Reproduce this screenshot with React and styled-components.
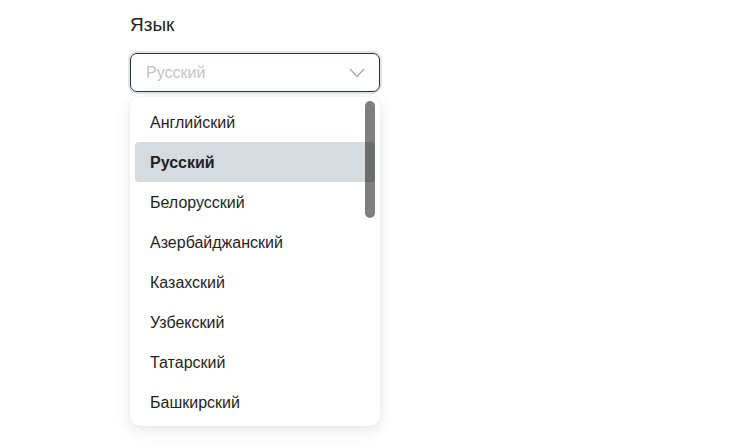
import React, { useState } from 'react';
import styled, { createGlobalStyle } from 'styled-components';

const GlobalStyle = createGlobalStyle`
  html, body {
    margin: 0;
    background: #ffffff;
    font-family: 'Liberation Sans', Arial, sans-serif;
    color: #1f1f1f;
  }
`;

const Page = styled.div`
  min-height: 446px;
  box-sizing: border-box;
  padding: 13px 0 0 130px;
`;

const Column = styled.div`
  width: 250px;
  display: flex;
  flex-direction: column;
`;

const Label = styled.div`
  font-size: 19px;
  line-height: 24px;
  color: #222;
  margin-bottom: 16px;
`;

const Control = styled.div`
  height: 39px;
  box-sizing: border-box;
  border: 1px solid #2e3338;
  border-radius: 7px;
  box-shadow: 0 0 0 2px #dfe5ea;
  display: flex;
  align-items: center;
  justify-content: space-between;
  padding: 1px 14px 0 15px;
  font-size: 16px;
  color: #c4c4c4;
`;

const Menu = styled.div`
  position: relative;
  margin-top: 5px;
  height: 329px;
  box-sizing: border-box;
  background: #fff;
  border-radius: 10px;
  box-shadow: 0 4px 16px rgba(0, 0, 0, 0.1), 0 0 3px rgba(0, 0, 0, 0.05);
  overflow: hidden;
`;

const List = styled.ul`
  list-style: none;
  margin: 0;
  padding: 5px;
`;

const Item = styled.li`
  height: 40px;
  box-sizing: border-box;
  display: flex;
  align-items: center;
  padding: 2px 0 0 15px;
  font-size: 16px;
  border-radius: 4px;
  color: #1f1f1f;
  font-weight: ${(p) => (p.$active ? 700 : 400)};
  background: ${(p) => (p.$active ? '#d5dbde' : 'transparent')};
`;

const Thumb = styled.div`
  position: absolute;
  top: 4px;
  right: 5px;
  width: 10px;
  height: 117px;
  border-radius: 5px;
  background: rgba(0, 0, 0, 0.5);
`;

const languages = [
  'Английский',
  'Русский',
  'Белорусский',
  'Азербайджанский',
  'Казахский',
  'Узбекский',
  'Татарский',
  'Башкирский',
];

const Chevron = () => (
  <svg width="16" height="10" viewBox="0 0 16 10" fill="none">
    <path d="M1 1l7 7.5L15 1" stroke="#a8a8a8" strokeWidth="1.3" />
  </svg>
);

export default function App() {
  const [value] = useState('Русский');
  return (
    <>
      <GlobalStyle />
      <Page>
        <Column>
          <Label>Язык</Label>
          <Control>
            <span>{value}</span>
            <Chevron />
          </Control>
          <Menu>
            <List>
              {languages.map((l) => (
                <Item key={l} $active={l === value}>
                  {l}
                </Item>
              ))}
            </List>
            <Thumb />
          </Menu>
        </Column>
      </Page>
    </>
  );
}
